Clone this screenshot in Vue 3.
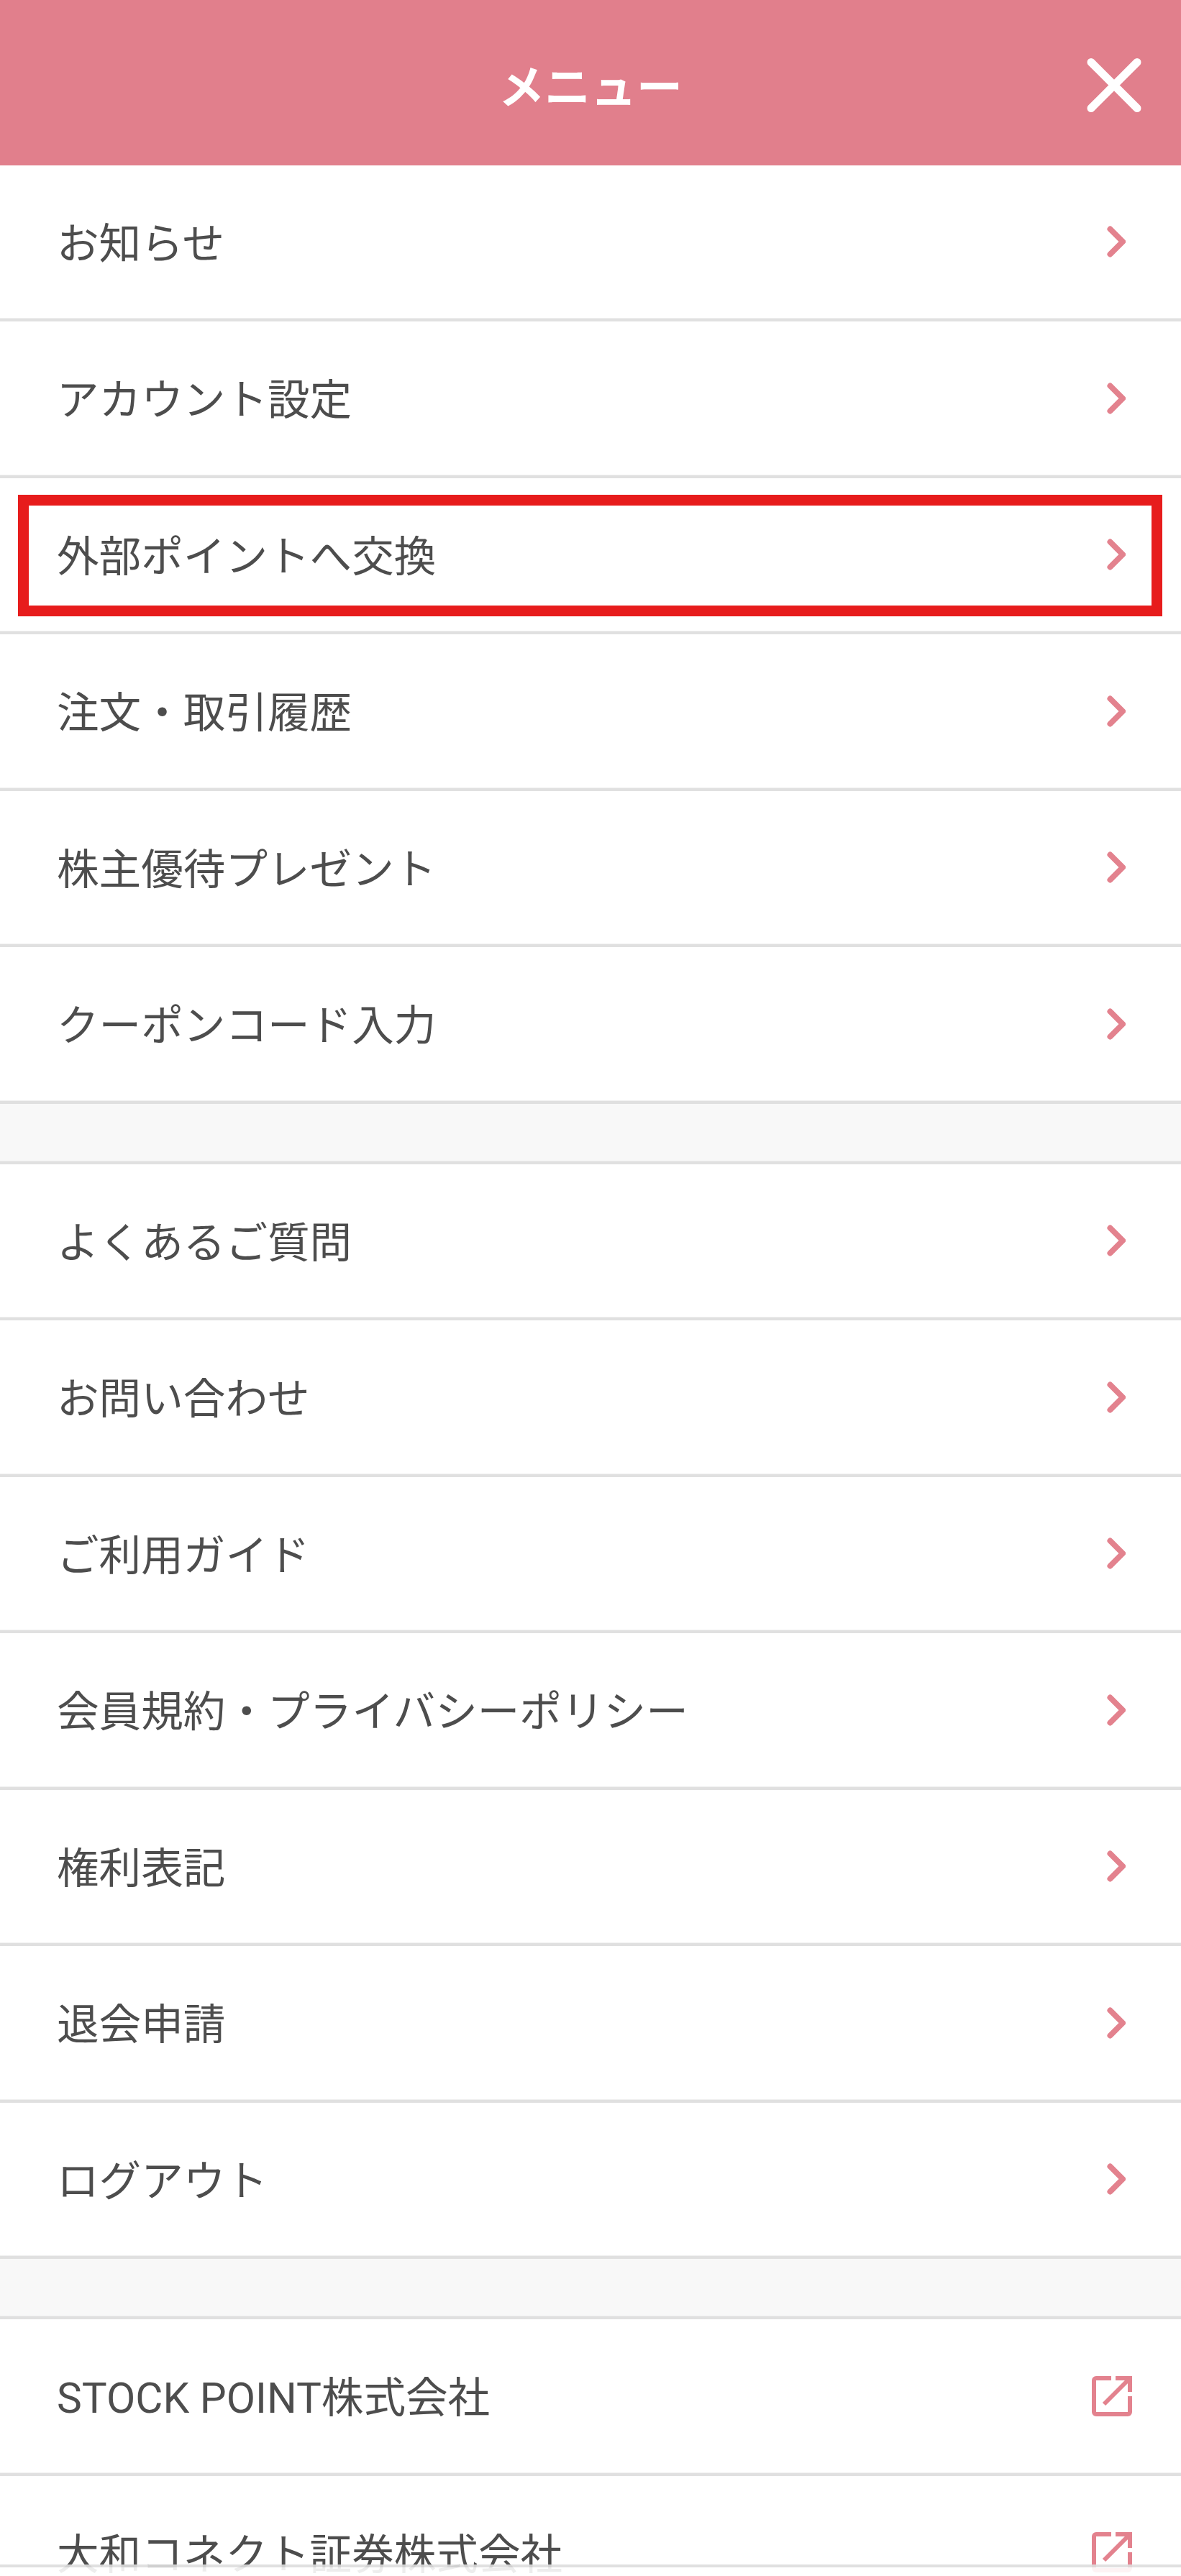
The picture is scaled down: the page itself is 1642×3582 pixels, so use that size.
<script setup>
const sections = [
  [
    { label: 'お知らせ' },
    { label: 'アカウント設定' },
    { label: '外部ポイントへ交換', marked: true },
    { label: '注文・取引履歴' },
    { label: '株主優待プレゼント' },
    { label: 'クーポンコード入力' }
  ],
  [
    { label: 'よくあるご質問' },
    { label: 'お問い合わせ' },
    { label: 'ご利用ガイド' },
    { label: '会員規約・プライバシーポリシー' },
    { label: '権利表記' },
    { label: '退会申請' },
    { label: 'ログアウト' }
  ],
  [
    { label: 'STOCK POINT株式会社', external: true },
    { label: '大和コネクト証券株式会社', external: true }
  ]
]
</script>

<template>
  <div class="page">
    <header class="header">
      <h1 class="title">メニュー</h1>
      <button type="button" class="close" aria-label="閉じる">
        <svg width="76" height="77" viewBox="0 0 76 77" fill="none" stroke="#fff" stroke-width="11" stroke-linecap="round">
          <path d="M6 6.5 70 70.5M70 6.5 6 70.5" />
        </svg>
      </button>
    </header>

    <template v-for="(rows, i) in sections" :key="i">
      <div v-if="i > 0" class="spacer"></div>
      <ul class="list">
        <li v-for="row in rows" :key="row.label" class="row" :class="{ marked: row.marked }">
          <span class="label">{{ row.label }}</span>
          <svg v-if="row.external" width="56" height="56" viewBox="0 0 56 56" fill="none" stroke="#e3828e" stroke-width="6">
            <path d="M27 3H6a3 3 0 0 0-3 3v44a3 3 0 0 0 3 3h44a3 3 0 0 0 3-3V28" />
            <path d="M33 3h20v19M17 39 53 3" />
          </svg>
          <svg v-else class="chevron" width="26" height="44" viewBox="0 0 26 44" fill="none" stroke="#e3828e" stroke-width="8" stroke-linecap="round" stroke-linejoin="round">
            <path d="M4.5 4.5 22 22 4.5 39.5" />
          </svg>
        </li>
      </ul>
    </template>

    <div class="bottom-fade"></div>
  </div>
</template>

<style>
html,
body {
  margin: 0;
  background: #fff;
}
</style>

<style scoped>
.page {
  position: relative;
  height: 3582px;
  overflow: hidden;
  background: #fff;
  font-family: Roboto, "Noto Sans CJK JP", sans-serif;
  color: #4d4d4d;
}

.header {
  position: relative;
  display: flex;
  align-items: center;
  justify-content: center;
  height: 229.5px;
  background: #e17f8c;
}

.title {
  margin: 0;
  padding-top: 3px;
  font-size: 64px;
  font-weight: 700;
  color: #fff;
}

.close {
  position: absolute;
  top: 80px;
  right: 55px;
  display: flex;
  padding: 0;
  border: 0;
  background: none;
}

.list {
  margin: 0;
  padding: 0;
  list-style: none;
}

.row {
  position: relative;
  display: flex;
  align-items: center;
  justify-content: space-between;
  box-sizing: border-box;
  height: 217.5px;
  padding: 0 68px 0 79px;
  border-bottom: 4px solid #e0e0e0;
  box-shadow: inset 0 -1px 0 #f0f0f0;
  font-size: 58.6px;
}

.label {
  margin-bottom: 4px;
}

.marked::after {
  content: "";
  position: absolute;
  top: 23.5px;
  left: 25px;
  right: 26px;
  height: 169px;
  box-sizing: border-box;
  border: 15px solid #e71c1c;
}

.chevron {
  margin-right: 9px;
}

.spacer {
  box-sizing: border-box;
  height: 84px;
  border-bottom: 4px solid #e0e0e0;
  background: #f8f8f8;
  box-shadow: inset 0 -1px 0 #ececec;
}

.bottom-fade {
  position: absolute;
  top: 3566px;
  left: 0;
  right: 0;
  bottom: 0;
  border-top: 4px solid rgba(0, 0, 0, 0.12);
  background: rgba(255, 255, 255, 0.9);
}
</style>
